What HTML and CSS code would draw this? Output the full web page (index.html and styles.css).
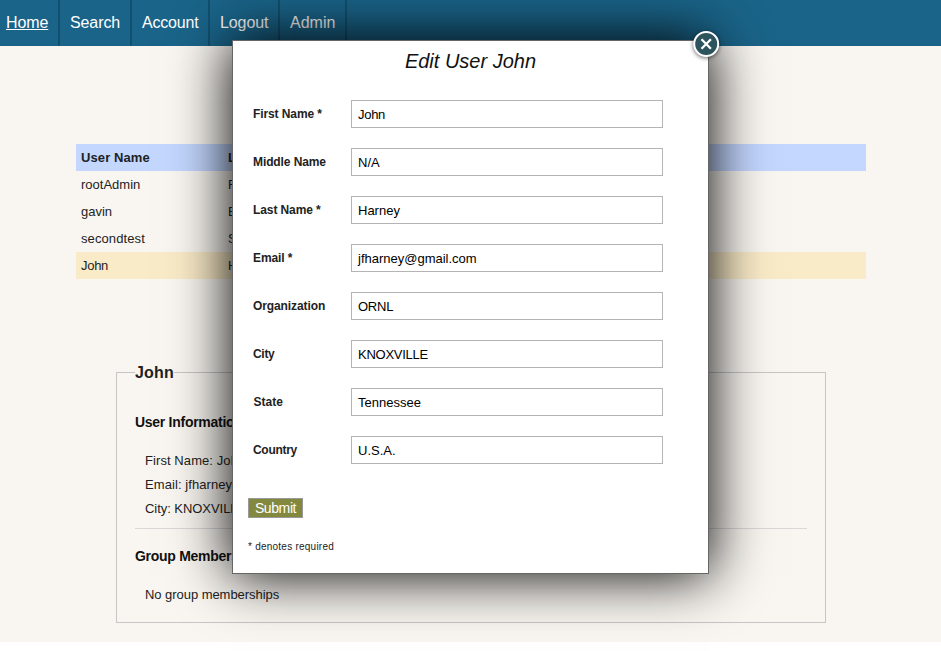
FILE: index.html
```html
<!DOCTYPE html>
<html lang="en">
<head>
<meta charset="utf-8">
<title>Edit User</title>
<link rel="stylesheet" href="styles.css">
</head>
<body>
<div class="page">
  <nav class="nav">
    <a class="nav-item home active">Home</a>
    <a class="nav-item search">Search</a>
    <a class="nav-item account">Account</a>
    <a class="nav-item logout">Logout</a>
    <a class="nav-item admin">Admin</a>
  </nav>
  <div class="users">
    <div class="row head"><span class="t-head">User Name</span><span>La</span></div>
    <div class="row"><span>rootAdmin</span><span>R</span></div>
    <div class="row"><span>gavin</span><span>B</span></div>
    <div class="row"><span class="t-second">secondtest</span><span>S</span></div>
    <div class="row selected"><span class="t-john">John</span><span>H</span></div>
  </div>
  <section class="details">
    <h2 class="legend"><span>John</span></h2>
    <h3 class="subhead">User Information</h3>
    <div class="info">
      <p>First Name: John</p>
      <p>Email: jfharney@gmail.com</p>
      <p class="city">City: KNOXVILLE</p>
    </div>
    <h3 class="subhead groups">Group Memberships</h3>
    <p class="none">No group memberships</p>
  </section>
</div>
<div class="modal">
  <span class="close">
    <svg width="32" height="32" viewBox="0 0 32 32">
      <circle cx="16.2" cy="16" r="12" fill="#2d535d" stroke="#fff" stroke-width="2"/>
      <path d="M11.5 11.3L20.9 20.7M20.9 11.3L11.5 20.7" stroke="#fff" stroke-width="2.3" fill="none"/>
    </svg>
  </span>
  <h1 class="title">Edit User John</h1>
  <form class="form">
    <div class="field"><label class="spaced">First Name *</label><div class="input john">John</div></div>
    <div class="field"><label class="spaced">Middle Name</label><div class="input">N/A</div></div>
    <div class="field"><label class="spaced">Last Name *</label><div class="input">Harney</div></div>
    <div class="field"><label class="spaced">Email *</label><div class="input">jfharney@gmail.com</div></div>
    <div class="field"><label class="spaced">Organization</label><div class="input caps">ORNL</div></div>
    <div class="field"><label class="tight">City</label><div class="input caps">KNOXVILLE</div></div>
    <div class="field"><label class="state">State</label><div class="input">Tennessee</div></div>
    <div class="field"><label class="tight">Country</label><div class="input">U.S.A.</div></div>
  </form>
  <div class="submit">Submit</div>
  <p class="note">* denotes required</p>
</div>
</body>
</html>
```
FILE: styles.css
```css
* { box-sizing: border-box; }
html, body, h1, h2, h3, p { margin: 0; padding: 0; }
body {
  position: relative;
  width: 941px;
  height: 651px;
  overflow: hidden;
  background: #fff;
  color: #222;
  font-family: "Liberation Sans", Arial, sans-serif;
  font-size: 13px;
}
.page { height: 642px; background: #f9f6f1; }

.nav { display: flex; height: 46px; background: #1a6489; }
.nav-item {
  height: 46px;
  padding-left: 10px;
  border-right: 2px solid #12506f;
  color: #fff;
  font-size: 16px;
  line-height: 46px;
  letter-spacing: -0.1px;
  white-space: nowrap;
}
.home { width: 60px; padding-left: 6px; }
.search { width: 72px; }
.account { width: 78px; letter-spacing: -0.2px; }
.logout { width: 70px; }
.admin { width: 67px; letter-spacing: 0; }
.active { text-decoration: underline; }

.users { width: 790px; margin: 98px 0 0 76px; }
.row {
  display: grid;
  grid-template-columns: 147px 1fr;
  height: 27px;
  padding-left: 5px;
  line-height: 27px;
}
.head { background: #c3d7ff; font-weight: bold; }
.t-head { letter-spacing: 0.1px; }
.t-second { letter-spacing: 0.1px; }
.t-john { letter-spacing: -0.3px; }
.selected { background: #faebc8; }

.details {
  width: 710px;
  height: 251px;
  margin: 93px 0 0 116px;
  padding: 0 18px;
  border: 1px solid #c6c6c6;
}
.legend { height: 20px; margin-top: -10px; font-size: 16px; line-height: 20px; }
.legend span { background: #f9f6f1; letter-spacing: 0.2px; }
.subhead { margin-top: 30px; font-size: 14px; line-height: 18px; letter-spacing: -0.28px; color: #111; }
.info { margin-top: 18px; padding: 0 0 7px 10px; border-bottom: 1px solid #d9d9d9; letter-spacing: 0.08px; }
.info p { height: 24px; line-height: 24px; }
.info .city { letter-spacing: -0.05px; }
.groups { margin-top: 18px; }
.none { margin: 18px 0 0 10px; line-height: 24px; letter-spacing: -0.05px; }

.modal {
  position: absolute;
  left: 232px;
  top: 40px;
  width: 477px;
  height: 534px;
  border: 1px solid #666;
  background: #fff;
  box-shadow: 0 0 54px 1px #000;
}
.close { position: absolute; left: 457px; top: -13px; filter: drop-shadow(0 1px 2px rgba(0, 0, 0, .6)); }
.close svg { display: block; }
.title {
  height: 59px;
  padding-top: 8px;
  color: #111;
  font-size: 20px;
  font-style: italic;
  font-weight: normal;
  line-height: 24px;
  text-align: center;
}
.form { display: grid; gap: 20px; padding-left: 20px; }
.field { display: grid; grid-template-columns: 98px 312px; height: 28px; }
.field label { font-size: 12px; font-weight: bold; line-height: 28px; }
.field .spaced { letter-spacing: -0.1px; }
.field .tight { letter-spacing: -0.3px; }
.field .state { padding-left: 0.6px; }
.input { height: 28px; padding-left: 6px; border: 1px solid #b4b4b4; color: #000; line-height: 27px; }
.caps { letter-spacing: -0.25px; }
.john { letter-spacing: -0.3px; }
.submit {
  width: 55px;
  height: 20px;
  margin: 34px 0 0 15px;
  border: 1px solid #999;
  background: #82893f;
  color: #fff;
  font-size: 14px;
  line-height: 19px;
  letter-spacing: -0.4px;
  text-align: center;
}
.note { margin: 22px 0 0 15px; font-size: 10px; line-height: 14px; letter-spacing: 0.24px; }
```
